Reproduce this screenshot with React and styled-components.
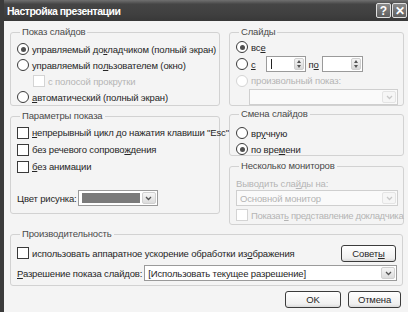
import React from "react";
import styled, { createGlobalStyle } from "styled-components";

const GlobalStyle = createGlobalStyle`
  html, body { margin: 0; padding: 0; background: #f4f4f4; }
  body { font-family: "Liberation Sans", Arial, sans-serif; }
`;

const Window = styled.div`
  width: 408px;
  height: 312px;
  box-sizing: border-box;
  border-left: 4px solid #3b3b3b;
  background: #f4f4f4;
  display: flex;
  flex-direction: column;
  overflow: hidden;
  font-size: 9.5px;
  letter-spacing: -0.15px;
  color: #262626;
`;

const TitleBar = styled.div`
  height: 21px;
  flex: none;
  box-sizing: border-box;
  background: linear-gradient(#707070, #454545 20%, #3f3f3f 70%, #383838);
  display: flex;
  align-items: center;
  justify-content: space-between;
  padding: 0 1px 0 3px;
`;

const Title = styled.div`
  color: #fff;
  font-weight: bold;
  font-size: 10.5px;
  letter-spacing: -0.5px;
`;

const TitleButtons = styled.div`
  display: flex;
  gap: 1px;
`;

const TitleButton = styled.div`
  width: 15px;
  height: 15px;
  box-sizing: border-box;
  border: 1px solid #e0e0e0;
  border-radius: 2px;
  background: linear-gradient(#8a8a8a, #5e5e5e);
  color: #fff;
  font-weight: bold;
  font-size: 12px;
  letter-spacing: 0;
  display: flex;
  align-items: center;
  justify-content: center;
`;

const Body = styled.div`
  flex: 1;
  padding: 5px 5px 0 6px;
  display: flex;
  flex-direction: column;
`;

const Columns = styled.div`
  display: grid;
  grid-template-columns: 210px 175px;
  column-gap: 9px;
  align-items: start;
`;

const Column = styled.div`
  display: flex;
  flex-direction: column;
  gap: ${(p) => p.$gap || 4}px;
`;

const Group = styled.fieldset`
  margin: ${(p) => p.$mt || 0}px 0 0 0;
  min-width: 0;
  box-sizing: border-box;
  height: ${(p) => p.$h}px;
  border: 1px solid #d2d2d2;
  border-radius: 3px;
  padding: ${(p) => p.$pt || 0}px 4px 0 6px;
`;

const Legend = styled.legend`
  padding: 0 2px;
  margin-left: 3px;
  line-height: 12px;
  font-size: 9.5px;
  color: #4a4a4a;
`;

const Row = styled.div`
  height: ${(p) => p.$h || 16}px;
  display: flex;
  align-items: center;
  padding-left: ${(p) => p.$indent || 0}px;
  color: ${(p) => (p.$disabled ? "#b4b4b4" : "inherit")};
  letter-spacing: ${(p) => (p.$tight ? "-0.35px" : "inherit")};
  white-space: nowrap;
  margin-top: ${(p) => p.$mt || 0}px;
`;

const Spacer = styled.div`
  flex: 1;
`;

const Radio = styled.span`
  width: 12px;
  height: 12px;
  box-sizing: border-box;
  border-radius: 50%;
  border: 1px solid ${(p) => (p.$disabled ? "#d4d4d4" : "#3a3a3a")};
  background: #fff;
  margin-right: 3px;
  flex: none;
  display: flex;
  align-items: center;
  justify-content: center;
  &::after {
    content: "";
    width: 5px;
    height: 5px;
    border-radius: 50%;
    background: ${(p) => (p.$checked ? "#505050" : "transparent")};
  }
`;

const Check = styled.span`
  width: 12px;
  height: 12px;
  box-sizing: border-box;
  border: 1px solid ${(p) => (p.$disabled ? "#d4d4d4" : "#3a3a3a")};
  background: #fff;
  margin-right: 3px;
  flex: none;
`;

const Key = styled.u`
  text-decoration: underline;
`;

const Spin = styled.div`
  width: ${(p) => p.$w}px;
  height: 16px;
  box-sizing: border-box;
  border: 1px solid #9a9a9a;
  background: #fff;
  display: flex;
  align-items: center;
  justify-content: space-between;
  padding: 0 1px 0 4px;
  margin: 0 ${(p) => p.$mr || 0}px 0 ${(p) => p.$ml || 0}px;
`;

const Caret = styled.span`
  width: 1px;
  height: 10px;
  background: #222;
`;

const SpinButtons = styled.div`
  width: 10px;
  height: 12px;
  border-radius: 2px;
  background: linear-gradient(#f4f4f4, #d8d8d8);
  border: 1px solid #cfcfcf;
  box-sizing: border-box;
  display: flex;
  flex-direction: column;
  align-items: center;
  justify-content: space-around;
`;

const Tri = styled.span`
  width: 0;
  height: 0;
  border-left: 2.5px solid transparent;
  border-right: 2.5px solid transparent;
  ${(p) => (p.$up ? "border-bottom" : "border-top")}: 3px solid #555;
`;

const Select = styled.div`
  width: ${(p) => (p.$w ? `${p.$w}px` : "auto")};
  flex: ${(p) => (p.$w ? "none" : 1)};
  height: 16px;
  box-sizing: border-box;
  border: 1px solid ${(p) => (p.$disabled ? "#cfcfcf" : "#9a9a9a")};
  background: ${(p) => (p.$disabled ? "#fafafa" : "#fff")};
  color: ${(p) => (p.$disabled ? "#b4b4b4" : "#262626")};
  display: flex;
  align-items: center;
  padding: 0 1px 0 3px;
  gap: 2px;
  margin-left: ${(p) => p.$ml || 0}px;
  margin-right: ${(p) => p.$mr || 0}px;
`;

const SelectText = styled.span`
  flex: 1;
  white-space: nowrap;
  overflow: hidden;
`;

const Swatch = styled.span`
  flex: 1;
  height: 10px;
  background: #7a7a7a;
`;

const Arrow = styled.span`
  width: 14px;
  height: 12px;
  box-sizing: border-box;
  border-radius: 2px;
  border: 1px solid ${(p) => (p.$disabled ? "#e4e4e4" : "#d0d0d0")};
  background: ${(p) =>
    p.$disabled ? "#f6f6f6" : "linear-gradient(#f6f6f6, #dcdcdc)"};
  display: flex;
  align-items: center;
  justify-content: center;
  flex: none;
`;

const Button = styled.div`
  width: ${(p) => p.$w}px;
  height: 17px;
  box-sizing: border-box;
  border: 1px solid #3c3c3c;
  border-radius: 3px;
  background: linear-gradient(#ffffff, #f0f0f0 80%, #dadada);
  display: flex;
  align-items: center;
  justify-content: center;
  flex: none;
  margin-right: ${(p) => p.$mr || 0}px;
`;

const Footer = styled.div`
  display: flex;
  justify-content: flex-end;
  gap: 7px;
  margin-top: 5px;
  padding-right: 2px;
`;

function Chevron({ disabled }) {
  return (
    <Arrow $disabled={disabled}>
      <svg width="7" height="5" viewBox="0 0 7 5">
        <path
          d="M1 1 L3.5 3.5 L6 1"
          fill="none"
          stroke={disabled ? "#c8c8c8" : "#555"}
          strokeWidth="1.3"
        />
      </svg>
    </Arrow>
  );
}

function SpinBox({ w, caret, ml, mr }) {
  return (
    <Spin $w={w} $ml={ml} $mr={mr}>
      {caret ? <Caret /> : <span />}
      <SpinButtons>
        <Tri $up />
        <Tri />
      </SpinButtons>
    </Spin>
  );
}

export default function App() {
  return (
    <>
      <GlobalStyle />
      <Window>
        <TitleBar>
          <Title>Настройка презентации</Title>
          <TitleButtons>
            <TitleButton>?</TitleButton>
            <TitleButton>✕</TitleButton>
          </TitleButtons>
        </TitleBar>
        <Body>
          <Columns>
            <Column>
              <Group $h={80} $pt={3}>
                <Legend>Показ слайдов</Legend>
                <Row>
                  <Radio $checked />
                  управляемый до<Key>к</Key>ладчиком (полный экран)
                </Row>
                <Row>
                  <Radio />
                  управляемый по<Key>л</Key>ьзователем (окно)
                </Row>
                <Row $indent={16} $disabled>
                  <Check $disabled />с полосой прокрутки
                </Row>
                <Row>
                  <Radio />
                  <Key>а</Key>втоматический (полный экран)
                </Row>
              </Group>
              <Group $h={104} $pt={2}>
                <Legend>Параметры показа</Legend>
                <Row $h={17}>
                  <Check />
                  <Key>н</Key>епрерывный цикл до нажатия клавиши "Esc"
                </Row>
                <Row $h={17}>
                  <Check />
                  без речевого сопрово<Key>ж</Key>дения
                </Row>
                <Row $h={17}>
                  <Check />
                  <Key>б</Key>ез анимации
                </Row>
                <Row $h={18} $mt={14}>
                  <span>Цвет рисунка:</span>
                  <Select $w={80} $ml={1}>
                    <Swatch />
                    <Chevron />
                  </Select>
                </Row>
              </Group>
            </Column>
            <Column $gap={2}>
              <Group $h={80} $pt={1}>
                <Legend>Слайды</Legend>
                <Row>
                  <Radio $checked />
                  вс<Key>е</Key>
                </Row>
                <Row $h={18}>
                  <Radio />
                  <Key>с</Key>
                  <SpinBox w={40} caret ml={10} mr={3} />
                  п<Key>о</Key>
                  <SpinBox w={41} ml={3} />
                </Row>
                <Row $h={15} $disabled>
                  <Radio $disabled />
                  произвольный показ:
                </Row>
                <Row $h={16} $mt={1}>
                  <Select $disabled $ml={13} $mr={1}>
                    <SelectText />
                    <Chevron disabled />
                  </Select>
                </Row>
              </Group>
              <Group $h={48} $pt={5}>
                <Legend>Смена слайдов</Legend>
                <Row>
                  <Radio />
                  вр<Key>у</Key>чную
                </Row>
                <Row>
                  <Radio $checked />
                  по вре<Key>м</Key>ени
                </Row>
              </Group>
              <Group $h={65} $mt={2} $pt={4}>
                <Legend>Несколько мониторов</Legend>
                <Row $h={14} $disabled>
                  Выводить сла<Key>й</Key>ды на:
                </Row>
                <Row $h={16}>
                  <Select $disabled $mr={1}>
                    <SelectText>Основной монитор</SelectText>
                    <Chevron disabled />
                  </Select>
                </Row>
                <Row $h={18} $disabled $tight>
                  <Check $disabled />
                  Показат<Key>ь</Key>&nbsp;представление докладчика
                </Row>
              </Group>
            </Column>
          </Columns>
          <Group $h={58} $mt={3} $pt={4}>
            <Legend>Производительность</Legend>
            <Row $h={18}>
              <Check />
              использовать аппаратное ускорение обработки из<Key>о</Key>бражения
              <Spacer />
              <Button $w={55} $mr={2}>
                Совет<Key>ы</Key>
              </Button>
            </Row>
            <Row $h={18} $mt={2}>
              <span>
                <Key>Р</Key>азрешение показа слайдов:
              </span>
              <Select $ml={2} $mr={1}>
                <SelectText>[Использовать текущее разрешение]</SelectText>
                <Chevron />
              </Select>
            </Row>
          </Group>
          <Footer>
            <Button $w={56}>OK</Button>
            <Button $w={53}>Отмена</Button>
          </Footer>
        </Body>
      </Window>
    </>
  );
}
